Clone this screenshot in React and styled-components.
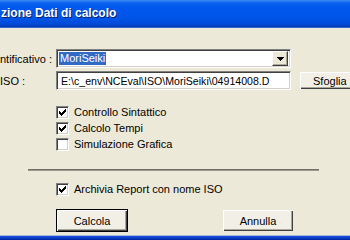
import React from "react";
import styled, { createGlobalStyle } from "styled-components";

const Global = createGlobalStyle`
  html, body { margin: 0; padding: 0; overflow: hidden; background: #ECE9D8; }
  * { box-sizing: border-box; }
`;

const Window = styled.div`
  width: 350px;
  height: 240px;
  display: flex;
  flex-direction: column;
  overflow: hidden;
  font-family: "Liberation Sans", Arial, sans-serif;
  font-size: 11px;
  color: #000;
`;

const TitleBar = styled.div`
  height: 28px;
  flex: none;
  display: flex;
  align-items: center;
  padding: 0 0 3px 1px;
  background: linear-gradient(
    to bottom,
    #3d8af7 0px,
    #0a63ee 3px,
    #0058ee 7px,
    #0055e8 18px,
    #004ad8 24px,
    #003bb5 27px,
    #6d8fd6 28px
  );
`;

const Title = styled.span`
  color: #fff;
  font-weight: bold;
  font-size: 12px;
  white-space: nowrap;
  text-shadow: 1px 1px 0 #0a1f6e;
`;

const Client = styled.div`
  flex: 1;
  background: #ECE9D8;
  display: flex;
  flex-direction: column;
  padding-top: 21px;
`;

const FieldRow = styled.div`
  display: flex;
  align-items: center;
  height: 19px;
  margin-top: ${(p) => p.$gap || 0}px;
  white-space: nowrap;
`;

const Label = styled.span`
  width: 56px;
  flex: none;
  overflow: hidden;
`;

const Sunken = styled.div`
  width: 235px;
  height: 19px;
  flex: none;
  background: #fff;
  border-top: 1px solid #808080;
  border-left: 1px solid #808080;
  border-right: 1px solid #fff;
  border-bottom: 1px solid #fff;
  box-shadow: inset 1px 1px 0 #404040, inset -1px -1px 0 #d4d0c8;
  display: flex;
  align-items: center;
  padding: 0 2px 0 2px;
`;

const Selected = styled.span`
  background: #316ac5;
  color: #fff;
  padding: 0 1px;
  line-height: 13px;
`;

const InputText = styled.span`
  padding-left: 2px;
  font-size: 10.6px;
`;

const DropButton = styled.div`
  margin-left: auto;
  width: 16px;
  height: 15px;
  background: #ece9d8;
  border-top: 1px solid #fff;
  border-left: 1px solid #fff;
  border-right: 1px solid #404040;
  border-bottom: 1px solid #404040;
  box-shadow: inset -1px -1px 0 #aca899;
  display: flex;
  align-items: center;
  justify-content: center;
`;

const RaisedButton = styled.div`
  flex: none;
  width: ${(p) => p.$w || 75}px;
  height: ${(p) => p.$h || 23}px;
  margin-left: ${(p) => p.$ml || 0}px;
  background: #f2f0e6;
  border: 1px solid ${(p) => (p.$default ? "#000" : "#ece9d8")};
  box-shadow: inset 1px 1px 0 #fff, inset -1px -1px 0 #404040,
    inset -2px -2px 0 #aca899;
  display: flex;
  align-items: center;
  padding-left: ${(p) => p.$pl || 0}px;
  justify-content: ${(p) => (p.$pl ? "flex-start" : "center")};
`;

const CheckList = styled.div`
  display: flex;
  flex-direction: column;
  padding-left: 56px;
  margin-top: ${(p) => p.$mt || 0}px;
`;

const CheckRow = styled.div`
  display: flex;
  align-items: center;
  height: 16px;
  gap: 5px;
  white-space: nowrap;
`;

const Box = styled.span`
  width: 13px;
  height: 13px;
  flex: none;
  background: #fff;
  border-top: 1px solid #808080;
  border-left: 1px solid #808080;
  border-right: 1px solid #fff;
  border-bottom: 1px solid #fff;
  box-shadow: inset 1px 1px 0 #404040, inset -1px -1px 0 #d4d0c8;
  display: flex;
  align-items: center;
  justify-content: center;
`;

const Separator = styled.div`
  margin: 17px 0 0 28px;
  width: 291px;
  height: 2px;
  border-top: 1px solid #716f64;
  border-bottom: 1px solid #9d9b90;
`;

const ButtonRow = styled.div`
  display: flex;
  margin-top: 12px;
`;

const BottomFrame = styled.div`
  height: 5px;
  flex: none;
  background: linear-gradient(to bottom, #a6b7d8 0, #a6b7d8 1px, #1c4fd6 1px, #0a3dc8 3px, #00249c 5px);
`;

function Check({ checked, children }) {
  return (
    <CheckRow>
      <Box>
        {checked && (
          <svg width="7" height="7" viewBox="0 0 7 7" shapeRendering="crispEdges">
            <rect x="0" y="2" width="1" height="3" fill="#000" />
            <rect x="1" y="3" width="1" height="3" fill="#000" />
            <rect x="2" y="4" width="1" height="3" fill="#000" />
            <rect x="3" y="3" width="1" height="3" fill="#000" />
            <rect x="4" y="2" width="1" height="3" fill="#000" />
            <rect x="5" y="1" width="1" height="3" fill="#000" />
            <rect x="6" y="0" width="1" height="3" fill="#000" />
          </svg>
        )}
      </Box>
      <span>{children}</span>
    </CheckRow>
  );
}

export default function App() {
  return (
    <>
      <Global />
      <Window>
        <TitleBar>
          <Title>zione Dati di calcolo</Title>
        </TitleBar>
        <Client>
          <FieldRow>
            <Label>ntificativo :</Label>
            <Sunken>
              <Selected>MoriSeiki</Selected>
              <DropButton>
                <svg width="7" height="4" viewBox="0 0 7 4" shapeRendering="crispEdges">
                  <path d="M0 0H7L3.5 4Z" fill="#000" />
                </svg>
              </DropButton>
            </Sunken>
          </FieldRow>
          <FieldRow $gap={3}>
            <Label>ISO :</Label>
            <Sunken>
              <InputText>E:\c_env\NCEval\ISO\MoriSeiki\04914008.D</InputText>
            </Sunken>
            <RaisedButton $w={75} $h={19} $ml={8} $pl={13}>
              Sfoglia
            </RaisedButton>
          </FieldRow>
          <CheckList $mt={14}>
            <Check checked>Controllo Sintattico</Check>
            <Check checked>Calcolo Tempi</Check>
            <Check>Simulazione Grafica</Check>
          </CheckList>
          <Separator />
          <CheckList $mt={10}>
            <Check checked>Archivia Report con nome ISO</Check>
          </CheckList>
          <ButtonRow>
            <RaisedButton $w={72} $ml={56} $default>
              Calcola
            </RaisedButton>
            <RaisedButton $w={72} $ml={94}>
              Annulla
            </RaisedButton>
          </ButtonRow>
        </Client>
        <BottomFrame />
      </Window>
    </>
  );
}
